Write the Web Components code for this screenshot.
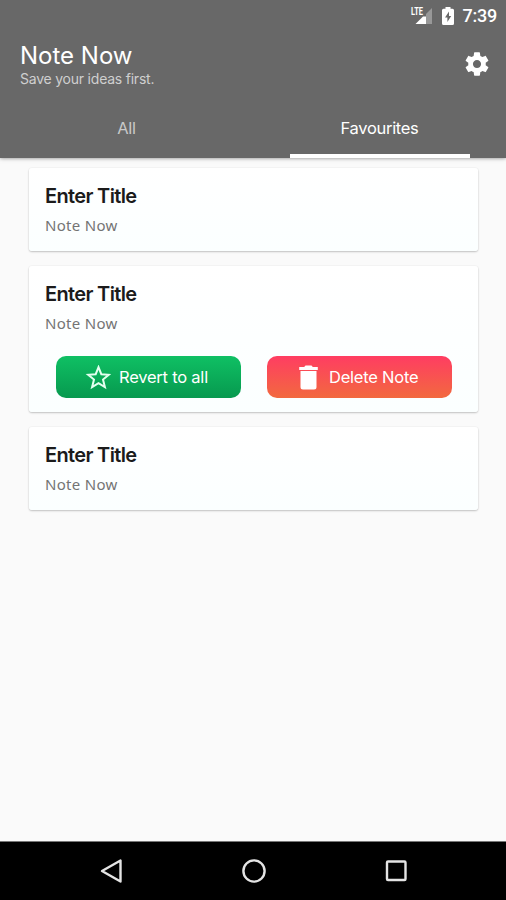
<!DOCTYPE html>
<html lang="en">
<head>
<meta charset="utf-8">
<title>Note Now</title>
<style>html,body{margin:0;height:100%;background:#fafafa}</style>
</head>
<body>
<note-app></note-app>
<script>
const define = (name, html) => customElements.define(name, class extends HTMLElement {
  constructor() {
    super();
    const t = document.createElement('template');
    t.innerHTML = html;
    this.attachShadow({mode: 'open'}).append(t.content.cloneNode(true));
  }
});

define('status-bar', `<style>
:host{display:flex;align-items:center;justify-content:flex-end;height:32px;padding-right:9px;box-sizing:border-box;color:#fff;font:500 18px/32px Roboto,sans-serif}
svg{display:block}.battery{margin:0 9px 0 9px}span{letter-spacing:-.25px}
text{font:700 10.500px Roboto,sans-serif}
</style>
<svg width="23" height="20" viewBox="0 0 23 20"><path d="M5.500 18 13 10.500h3V18z" fill="#fff"/><path d="M16 8l6-6v16h-6z" fill="#fff" opacity=".32"/><text x="1" y="9" textLength="12" lengthAdjust="spacingAndGlyphs" fill="#fff">LTE</text></svg>
<svg class="battery" width="12" height="18" viewBox="0 0 12 18"><path fill="#fff" fill-rule="evenodd" d="M3.500 0h5v1.700h2Q12 1.700 12 3.200v13.300Q12 18 10.500 18h-9Q0 18 0 16.500V3.200Q0 1.700 1.500 1.700h2zM7 4.500 3 10.400h2.400V15l3.800-6H7z"/></svg>
<span>7:39</span>`);

define('gear-icon', `<style>:host{display:block}svg{display:block}</style>
<svg width="28" height="28" viewBox="0 0 24 24"><path fill="#fff" d="M19.430 12.980c.04-.32.07-.64.07-.98s-.03-.66-.07-.98l2.110-1.650c.19-.15.24-.42.12-.64l-2-3.460c-.12-.22-.39-.3-.61-.22l-2.490 1c-.52-.4-1.080-.73-1.690-.98l-.38-2.650C14.460 2.180 14.250 2 14 2h-4c-.25 0-.46.18-.49.42l-.38 2.650c-.61.25-1.170.59-1.690.98l-2.490-1c-.23-.09-.49 0-.61.22l-2 3.460c-.13.22-.07.49.12.64l2.110 1.650c-.04.32-.07.65-.07.98s.03.66.07.98l-2.110 1.650c-.19.15-.24.42-.12.64l2 3.460c.12.22.39.3.61.22l2.490-1c.52.4 1.080.73 1.690.98l.38 2.650c.03.24.24.42.49.42h4c.25 0 .46-.18.49-.42l.38-2.650c.61-.25 1.170-.59 1.690-.98l2.490 1c.23.09.49 0 .61-.22l2-3.460c.12-.22.07-.49-.12-.64zM12 15.500c-1.930 0-3.500-1.570-3.500-3.500s1.570-3.500 3.500-3.500 3.500 1.570 3.500 3.500-1.570 3.500-3.500 3.500z"/></svg>`);

define('app-header', `<style>
:host{display:flex;flex-direction:column;height:158px;flex:none;background:#686868;box-shadow:0 0 4px rgba(0,0,0,.5);z-index:1}
.bar{display:flex;justify-content:space-between;height:68px;padding:0 15px 0 20px}
h1{margin:8px 0 0;font:400 24px/32px Inter,sans-serif;letter-spacing:0;color:#fff}
p{margin:-2px 0 0;font:400 14px/18px Inter,sans-serif;letter-spacing:-.22px;color:#cfcfcf}
gear-icon{margin-top:18px}
nav{display:flex;flex:1}
</style>
<status-bar></status-bar>
<div class="bar"><div><h1>Note Now</h1><p>Save your ideas first.</p></div><gear-icon></gear-icon></div>
<nav><slot></slot></nav>`);

define('tab-item', `<style>
:host{flex:1;display:flex;flex-direction:column;align-items:center;color:#c9c9c9;font:400 16.500px/57px Inter,sans-serif;letter-spacing:-.3px;height:58px}
i{display:none;width:180px;height:4px;margin-top:-3px;background:#fff}
:host([active]){color:#fff}:host([active]) i{display:block}
</style><span><slot></slot></span><i></i>`);

define('note-card', `<style>
:host{display:block;box-sizing:border-box;height:83px;padding:13px 15px 0 16px;border-radius:3px;background:linear-gradient(#fff,#fbffff);box-shadow:0 1px 2px rgba(0,0,0,.22),0 0 2px rgba(0,0,0,.07)}
:host([open]){height:146px}
h2{margin:0;font:600 20px/30px Inter,sans-serif;letter-spacing:-.65px;color:#1b1b1b}
p{margin:2px 0 0;font:400 15px/24px "Noto Sans",sans-serif;letter-spacing:.3px;color:#747474}
.actions{display:flex;justify-content:space-between;padding:21px 11px 0 11px}
</style><h2><slot name="title"></slot></h2><p><slot></slot></p><div class="actions"><slot name="action"></slot></div>`);

define('action-button', `<style>
:host{display:flex;align-items:center;box-sizing:border-box;width:185px;height:42px;padding-left:29px;border-radius:10px;background:linear-gradient(#0fc064,#07994f);color:#fff;font:400 16.500px/42px Inter,sans-serif;letter-spacing:-.22px}
:host([danger]){background:linear-gradient(#ff3d62,#f2693f)}
slot[name=icon]::slotted(svg){display:block;flex:none;margin-right:8px}
</style><slot name="icon"></slot><span><slot></slot></span>`);

define('nav-bar', `<style>
:host{display:flex;flex:none;justify-content:space-between;align-items:center;box-sizing:border-box;height:59px;padding:0 97px 1px 98px;background:#000;border-top:1px solid #777}
svg{display:block;fill:none;stroke:#e4e4e4;stroke-width:2.400;stroke-linejoin:round}
</style>
<svg width="26" height="26" viewBox="0 0 26 26"><path d="M4 13 22.500 2.500v21z"/></svg>
<svg width="26" height="26" viewBox="0 0 26 26"><circle cx="13" cy="13" r="10.600"/></svg>
<svg width="26" height="26" viewBox="0 0 26 26"><rect x="4" y="3.500" width="18.500" height="18.500" rx="1"/></svg>`);

define('note-app', `<style>
:host{display:flex;flex-direction:column;width:506px;height:900px;background:#fafafa;overflow:hidden}
main{flex:1;display:flex;flex-direction:column;gap:15px;padding:10px 28px 0 29px}
</style>
<app-header><tab-item>All</tab-item><tab-item active>Favourites</tab-item></app-header>
<main>
<note-card><span slot="title">Enter Title</span>Note Now</note-card>
<note-card open><span slot="title">Enter Title</span>Note Now
<action-button slot="action"><svg slot="icon" width="26" height="25" viewBox="0 0 26 25"><path d="M13.500 2.200l2.800 7 7.500.6-5.800 4.800 1.900 7.500-6.400-4-6.400 4L9 14.600 3.200 9.800l7.500-.6z" fill="none" stroke="#e4ffef" stroke-width="2"/></svg>Revert to all</action-button>
<action-button slot="action" danger><svg slot="icon" width="25" height="26" viewBox="0 0 25 26"><path d="M3.200 3h5l1.300-1.500h6L16.800 3h5v3H3.200zM4.500 7h16v16q0 2.500-2.500 2.500H7q-2.500 0-2.500-2.500z" fill="#fff"/></svg>Delete Note</action-button></note-card>
<note-card><span slot="title">Enter Title</span>Note Now</note-card>
</main>
<nav-bar></nav-bar>`);
</script>
</body>
</html>
